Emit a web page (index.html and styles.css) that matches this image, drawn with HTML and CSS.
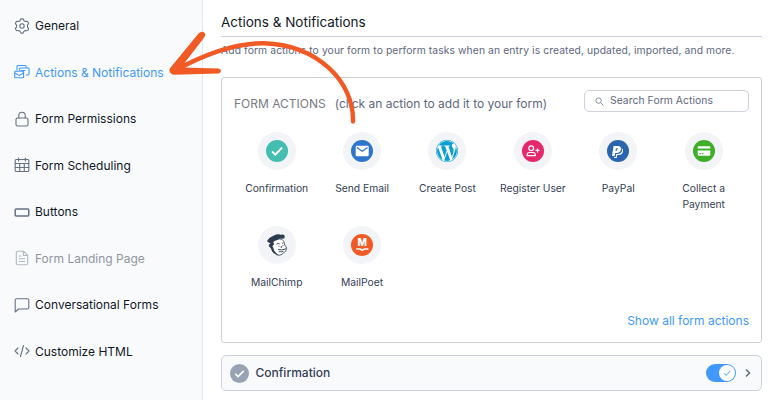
FILE: index.html
```html
<!DOCTYPE html>
<html lang="en">
<head>
  <meta charset="UTF-8">
  <meta name="viewport" content="width=device-width, initial-scale=1.0">
  <title>Form Settings</title>
  <link rel="stylesheet" href="styles.css">
</head>
<body>
  <div class="settings">
    <nav class="sidebar">
      <a class="nav-item" href="#">
        <svg class="nav-icon" viewBox="0 0 16 16"><path d="M6.500 1.700 7 .9h2l.5.8.5 1.100 1.300.7 1.300-.2 1 .2 1 1.700-.4 1-.8 1v1.600l.8 1 .4 1-1 1.700-1 .2-1.300-.2-1.300.7-.5 1.100-.5.800H7l-.5-.8L6 13.200l-1.300-.7-1.300.2-1-.2-1-1.700.4-1 .8-1V7.200l-.8-1-.4-1 1-1.700 1-.2 1.300.2L6 2.800z"/><circle cx="8" cy="8" r="2.200"/></svg>
        <span>General</span>
      </a>
      <a class="nav-item active" href="#">
        <svg class="nav-icon" viewBox="0 0 16 16"><path d="M3 6V2.300q0-.8.800-.8h7.400q.8 0 .8.800v1M5.500 6V4.800q0-.8.8-.8h7.900q.8 0 .8.800v5.400q0 .8-.8.800h-2M7 6.500h4M.7 8q0-.8.800-.8h7.300q.8 0 .8.800v4.900q0 .8-.8.800H1.500q-.8 0-.8-.8zM1 9l4.200 2.600L9.300 9"/></svg>
        <span>Actions &amp; Notifications</span>
      </a>
      <a class="nav-item" href="#">
        <svg class="nav-icon" viewBox="0 0 16 16"><rect x="2" y="7" width="12" height="8" rx="1.500"/><path d="M4.800 7V4.500a3.200 3.200 0 0 1 6.400 0V7"/></svg>
        <span>Form Permissions</span>
      </a>
      <a class="nav-item" href="#">
        <svg class="nav-icon" viewBox="0 0 16 16"><rect x="1.200" y="2.500" width="13.600" height="12" rx="1"/><path d="M1.200 6.500h13.600M1.200 10.500h13.600M5.700 6.500v8M10.300 6.500v8M4.600 1v3M11.400 1v3"/></svg>
        <span>Form Scheduling</span>
      </a>
      <a class="nav-item" href="#">
        <svg class="nav-icon thick" viewBox="0 0 16 16"><rect x="1.200" y="4.900" width="13.600" height="7" rx="1"/></svg>
        <span>Buttons</span>
      </a>
      <a class="nav-item disabled" href="#">
        <svg class="nav-icon" viewBox="0 0 16 16"><path d="M9.500 1.200H4Q2.300 1.200 2.300 3v10q0 1.700 1.700 1.700h8q1.700 0 1.700-1.700V5.400zM9.300 1.500v4h4M5.200 6h1.600M5.200 8.800h5.600M5.200 11.500h5.600"/></svg>
        <span>Form Landing Page</span>
      </a>
      <a class="nav-item" href="#">
        <svg class="nav-icon" viewBox="0 0 16 16"><path d="M2.700 1.700h10.600q1.500 0 1.500 1.500v7.300q0 1.500-1.500 1.500H4.500L1.200 15V3.200q0-1.500 1.500-1.500z"/></svg>
        <span>Conversational Forms</span>
      </a>
      <a class="nav-item" href="#">
        <svg class="nav-icon" viewBox="0 0 16 16"><path d="M4 5 1 8l3 3M12 5l3 3-3 3M9.500 2.500l-3 11"/></svg>
        <span>Customize HTML</span>
      </a>
    </nav>

    <main class="content">
      <h1>Actions &amp; Notifications</h1>
      <p class="intro">Add form actions to your form to perform tasks when an entry is created, updated, imported, and more.</p>

      <section class="card">
        <div class="card-head">
          <h2>FORM ACTIONS</h2>
          <span class="hint">(click an action to add it to your form)</span>
          <div class="search">
            <svg viewBox="0 0 10 10"><circle cx="4" cy="4" r="3"/><path d="m6.300 6.300 3 3"/></svg>
            <span>Search Form Actions</span>
          </div>
        </div>

        <div class="actions">
          <div class="action">
            <div class="circle"><svg viewBox="0 0 22 22"><circle cx="11" cy="11" r="11" fill="#43beb0"/><path d="m6 11.300 3.300 3.300 6.800-6.900" fill="none" stroke="#fff" stroke-width="1.900"/></svg></div>
            <span>Confirmation</span>
          </div>
          <div class="action">
            <div class="circle"><svg viewBox="0 0 22 22"><circle cx="11" cy="11" r="11" fill="#2e75cc"/><rect x="4.700" y="5.800" width="13" height="10.400" rx="1" fill="#fff"/><path d="m5.800 7.500 5.400 3.800 5.400-3.800" fill="none" stroke="#2e75cc" stroke-width="1.300"/></svg></div>
            <span>Send Email</span>
          </div>
          <div class="action">
            <div class="circle"><svg viewBox="0 0 24 24"><circle cx="12" cy="12" r="12" fill="#0a9fd0"/><circle cx="12" cy="12" r="11.400" fill="#fff"/><path fill="#0a9fd0" d="M21.469 6.825c.84 1.537 1.318 3.300 1.318 5.175 0 3.979-2.156 7.456-5.363 9.325l3.295-9.527c.615-1.540.820-2.771.820-3.864 0-.405-.026-.780-.070-1.110m-7.981.105c.647-.030 1.232-.105 1.232-.105.582-.075.514-.930-.067-.899 0 0-1.755.135-2.880.135-1.064 0-2.850-.150-2.850-.150-.585-.030-.661.855-.075.885 0 0 .540.061 1.125.090l1.680 4.605-2.370 7.080L5.354 6.900c.649-.030 1.234-.100 1.234-.100.585-.075.516-.930-.065-.896 0 0-1.746.138-2.874.138-.200 0-.438-.008-.690-.015C4.911 3.150 8.235 1.215 12 1.215c2.809 0 5.365 1.072 7.286 2.833-.046-.003-.091-.009-.141-.009-1.060 0-1.812.923-1.812 1.914 0 .890.513 1.643 1.060 2.531.411.720.890 1.643.890 2.977 0 .915-.354 1.994-.821 3.479l-1.075 3.585-3.900-11.610.001.014zM12 22.784c-1.059 0-2.081-.153-3.048-.437l3.237-9.406 3.315 9.087c.024.053.050.101.078.149-1.120.393-2.325.609-3.582.609M1.211 12c0-1.564.336-3.050.935-4.390L7.290 21.709C3.694 19.960 1.212 16.271 1.211 12"/></svg></div>
            <span>Create Post</span>
          </div>
          <div class="action">
            <div class="circle"><svg viewBox="0 0 22 22"><circle cx="11" cy="11" r="11" fill="#e5276d"/><g fill="none" stroke="#fff" stroke-width="1.200"><circle cx="9.200" cy="8.200" r="2.400"/><path d="M5.100 15.700v-.8q0-2.400 2.400-2.400h3.400q2.400 0 2.400 2.400v.8zM15.500 8.400v4M13.500 10.400h4"/></g></svg></div>
            <span>Register User</span>
          </div>
          <div class="action">
            <div class="circle"><svg viewBox="0 0 22 22"><circle cx="11" cy="11" r="11" fill="#2a66ad"/><text class="paypal" x="5" y="15.500">P</text></svg></div>
            <span>PayPal</span>
          </div>
          <div class="action">
            <div class="circle"><svg viewBox="0 0 22 22"><circle cx="11" cy="11" r="11" fill="#3fae29"/><path fill="#fff" d="M5.700 6.200h10.600q1 0 1 1v1.400H4.700V7.200q0-1 1-1zM4.700 10.500h12.600v4.200q0 1-1 1H5.700q-1 0-1-1z"/><path d="M6.200 13.700h2M9 13.700h1.500" stroke="#3fae29"/></svg></div>
            <span>Collect a Payment</span>
          </div>
          <div class="action">
            <div class="circle"><svg viewBox="0 0 22 22">
              <path d="M4.500 9.500q-2 1-1 3.200.8 1.200 1.900.9 1.200 4.600 4.600 6.900 3.900 2.200 7.700-1.700 2.700-1.200 2.900-4.300 0-2.200-1.700-2.900-.3-2-1.100-4.300-1.400-2.600-4.300-2.400-5 .6-9 4.600z" fill="#fff" stroke="#2d3b51" stroke-width=".800"/>
              <path d="M1 7.300Q2.800 3.300 7.500 1.700 12-.6 14.800.8q2.700-1 3.600.5.600 1.800-.4 3.500-3.600-.6-6.700.6Q8 6.500 5.600 9.500 2.800 9.300 1 7.300z" fill="#2d3b51"/>
              <path d="M5.300 7.500 8 8.800q.3 2.400-1.700 3.400l.8 1q1 5 5.500 7.700-6 0-8-7.300l-1.400-1.500q0-2 1.500-2.700z" fill="#2d3b51"/>
              <path d="M10.500 10.300q1.600-1.500 3.200-.4M16 9.300l1.300-.4M13 11.700v.9M17 11.200v.9M12 15.500q4 1.200 8-.8M12.800 17.500q3 .9 4.700-.4M15.300 12v2" fill="none" stroke="#2d3b51" stroke-width=".900"/>
            </svg></div>
            <span>MailChimp</span>
          </div>
          <div class="action">
            <div class="circle"><svg viewBox="0 0 22 22"><circle cx="11" cy="11" r="11" fill="#f15a24"/><text class="mailpoet" x="11.300" y="11.800">M</text><path d="M5.200 14.200h3.300q1.800 0 2.800 1.200 1-1.200 2.800-1.200h3.300v1.500h-3q-1.700 0-3.100 1.500-1.400-1.500-3.100-1.500h-3z" fill="#fff"/></svg></div>
            <span>MailPoet</span>
          </div>
        </div>

        <a class="show-all" href="#">Show all form actions</a>
      </section>

      <section class="action-row">
        <svg class="row-icon" viewBox="0 0 20 20"><circle cx="10" cy="10" r="10" fill="#98a2b3"/><path d="m5.500 10.300 3 3 6-6" fill="none" stroke="#fff" stroke-width="1.700"/></svg>
        <span class="row-title">Confirmation</span>
        <span class="toggle"><span class="knob"><svg viewBox="0 0 10 10"><path d="m2 5.300 2.100 2.100L8.300 3"/></svg></span></span>
        <svg class="chevron" viewBox="0 0 8 10"><path d="m2 1.500 3.500 3.500L2 8.500"/></svg>
      </section>
    </main>

    <!-- arrow pointing to the active tab -->
    <svg class="arrow" viewBox="0 0 192 98">
      <path class="shaft" d="M188 90.500C189 51 153 14 99 12.200 68 12 36 25 9 40"/>
      <path class="head" d="M33.700 2.200Q37-.8 39.700 2q1.200 2.200-.5 4.500L16 36.500 54 37.500q4 2.500 0 5L8 43.700Q3 41.500 5 37.200z"/>
    </svg>
  </div>
</body>
</html>
```

FILE: styles.css
```css
* {
  box-sizing: border-box;
  margin: 0;
  padding: 0;
}

body {
  font-family: Inter, "Liberation Sans", sans-serif;
  background-color: #fff;
  color: #101828;
}

a {
  color: inherit;
  text-decoration: none;
}

svg {
  display: block;
  flex-shrink: 0;
}

.settings {
  position: relative;
  display: flex;
  width: 775px;
  height: 400px;
  overflow: hidden;
}

/* Sidebar */
.sidebar {
  width: 203px;
  padding-top: 2.5px;
  background-color: #f9fafc;
  border-right: 1px solid #e4e7ec;
}

.nav-item {
  display: flex;
  align-items: center;
  gap: 5.5px;
  height: 46.5px;
  padding-left: 13.5px;
  font-size: 12px;
  white-space: nowrap;
}

.nav-icon {
  width: 16px;
  height: 16px;
  fill: none;
  stroke: #667085;
  stroke-width: 1.1;
  stroke-linecap: round;
  stroke-linejoin: round;
}

.nav-icon.thick {
  stroke-width: 1.5;
}

.active {
  color: #4199fd;
}

.active .nav-icon {
  stroke: #4199fd;
}

.disabled {
  color: #8f959f;
}

.disabled .nav-icon {
  stroke: #b2b8c3;
}

/* Content */
.content {
  flex: 1;
  padding: 8px 13px 0 18px;
}

h1 {
  height: 29px;
  line-height: 28px;
  border-bottom: 1px solid #cdd1de;
  font-size: 13.5px;
  font-weight: 400;
}

.intro {
  height: 40px;
  padding-top: 5px;
  line-height: 16px;
  font-size: 10.3px;
  letter-spacing: 0.11px;
  color: #5d6880;
  white-space: nowrap;
}

.card {
  height: 266px;
  padding: 12px 12px 0;
  border: 1px solid #cdd1de;
  border-radius: 3px;
}

.card-head {
  display: flex;
  align-items: center;
  height: 22px;
  white-space: nowrap;
}

h2 {
  padding-top: 4px;
  font-size: 12px;
  font-weight: 400;
  color: #777a82;
}

.hint {
  padding: 4px 0 0 9px;
  font-size: 12px;
  color: #5d6880;
}

.search {
  display: flex;
  align-items: center;
  gap: 6px;
  width: 165px;
  height: 22px;
  margin-left: auto;
  padding-left: 10px;
  border: 1px solid #cdd1de;
  border-radius: 5px;
  font-size: 10.3px;
  letter-spacing: 0.08px;
  color: #5d6880;
}

.search span {
  padding-bottom: 2px;
}

.search svg {
  width: 9px;
  height: 9px;
  fill: none;
  stroke: #858d9e;
  stroke-width: 1.1;
}

.actions {
  display: grid;
  grid-template-columns: repeat(6, 85.4px);
  grid-auto-rows: 94px;
  height: 181px;
  margin-top: 20px;
}

.action {
  display: flex;
  flex-direction: column;
  align-items: center;
  gap: 10px;
  font-size: 10.3px;
  line-height: 16px;
  text-align: center;
  color: #344054;
}

.action > span {
  width: 72px;
}

.circle {
  display: flex;
  align-items: center;
  justify-content: center;
  width: 38px;
  height: 38px;
  border-radius: 50%;
  background-color: #f2f4f7;
}

.circle svg {
  width: 22px;
  height: 22px;
}

.paypal {
  font: italic 900 13.5px Inter, sans-serif;
  fill: #fff;
  filter: drop-shadow(1px 1px 0 #2a66ad) drop-shadow(1px 1px 0 #fff);
}

.mailpoet {
  font: 800 10px Inter, sans-serif;
  fill: #fff;
  text-anchor: middle;
}

.show-all {
  display: block;
  text-align: right;
  line-height: 16px;
  font-size: 12px;
  color: #4199fd;
}

.action-row {
  display: flex;
  align-items: center;
  height: 36px;
  margin-top: 12px;
  padding: 0 9px 0 8px;
  background-color: #f9fafc;
  border: 1px solid #cdd1de;
  border-radius: 5px;
}

.row-icon {
  width: 19px;
  height: 19px;
}

.row-title {
  margin-left: 6.5px;
  padding-bottom: 1px;
  font-size: 12px;
  font-weight: 500;
  color: #344054;
}

.toggle {
  display: flex;
  justify-content: flex-end;
  width: 30px;
  height: 18px;
  margin-left: auto;
  padding: 1px;
  border-radius: 9px;
  background-color: #4199fd;
}

.knob {
  display: flex;
  align-items: center;
  justify-content: center;
  width: 16px;
  height: 16px;
  border-radius: 50%;
  background-color: #fff;
}

.knob svg {
  width: 10px;
  height: 10px;
  fill: none;
  stroke: #4199fd;
}

.chevron {
  width: 8px;
  height: 10px;
  margin-left: 8px;
  fill: none;
  stroke: #667085;
  stroke-width: 1.6;
}

/* Arrow over the page */
.arrow {
  position: absolute;
  left: 165px;
  top: 31px;
  width: 192px;
  height: 98px;
}

.shaft {
  fill: none;
  stroke: #f15a24;
  stroke-width: 4.4;
  stroke-linecap: round;
}

.head {
  fill: #f15a24;
}
```
